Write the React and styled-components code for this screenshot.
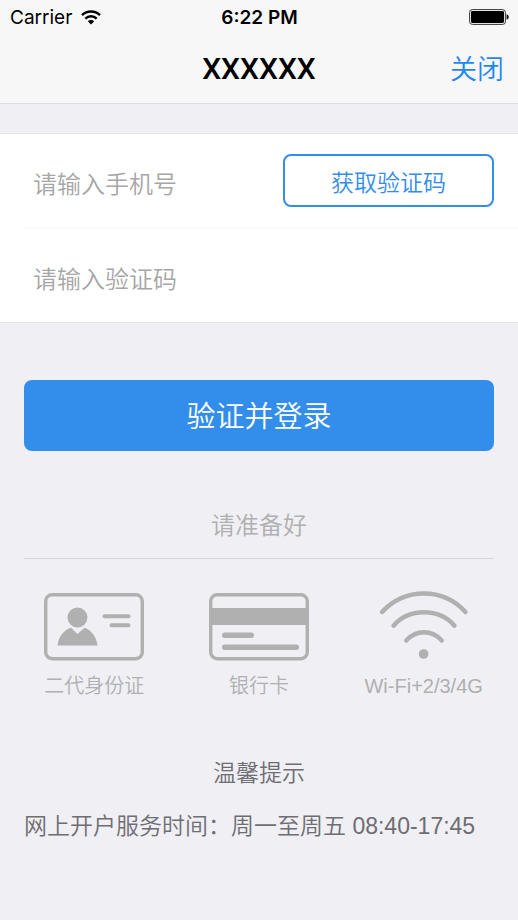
import { useState } from "react";
import { styled, createGlobalStyle } from "styled-components";

export default function App() {
  const [phone, setPhone] = useState("");
  const [code, setCode] = useState("");

  // TODO: validate phone + code before sending anything
  function handleSubmit(e) {
    e.preventDefault();
  }

  return (
    <>
      <GlobalStyle />
      <StyledHeader>
        <StyledStatusBar>
          <StyledCarrier>
            Carrier
            <SignalIcon />
          </StyledCarrier>
          <StyledTime>6:22 PM</StyledTime>
          <StyledBattery>
            <BatteryIcon />
          </StyledBattery>
        </StyledStatusBar>
        <StyledNavBar>
          <StyledTitle>XXXXXX</StyledTitle>
          <StyledCloseButton type="button">关闭</StyledCloseButton>
        </StyledNavBar>
      </StyledHeader>

      <main>
        <form onSubmit={handleSubmit}>
          <StyledFields>
            <StyledFieldRow>
              <StyledInput
                type="tel"
                aria-label="手机号"
                placeholder="请输入手机号"
                value={phone}
                onChange={(e) => setPhone(e.target.value)}
              />
              <StyledCodeButton type="button">获取验证码</StyledCodeButton>
            </StyledFieldRow>
            <StyledDivider />
            <StyledFieldRow>
              <StyledInput
                type="text"
                aria-label="验证码"
                placeholder="请输入验证码"
                value={code}
                onChange={(e) => setCode(e.target.value)}
              />
            </StyledFieldRow>
          </StyledFields>
          <StyledSubmitRow>
            <StyledLoginButton type="submit">验证并登录</StyledLoginButton>
          </StyledSubmitRow>
        </form>

        <StyledPrepareTitle>请准备好</StyledPrepareTitle>
        <StyledPrepareList>
          {prepareItems.map(({ label, Icon }) => (
            <StyledPrepareItem key={label}>
              <Icon />
              <span>{label}</span>
            </StyledPrepareItem>
          ))}
        </StyledPrepareList>

        <StyledTips>
          <StyledTipsTitle>温馨提示</StyledTipsTitle>
          <StyledTipsText>网上开户服务时间：周一至周五 08:40-17:45</StyledTipsText>
        </StyledTips>
      </main>
    </>
  );
}

function SignalIcon() {
  return (
    <svg width="20" height="15" viewBox="0 0 20 15" aria-hidden="true">
      <g fill="none" stroke="#000" strokeWidth="2.4">
        <path d="M1 5.2C6 .3 14 .3 19 5.2" />
        <path d="M4.3 8.6C7.6 5.5 12.4 5.5 15.7 8.6" />
      </g>
      <path d="M6.8 11.2C8.6 9.6 11.4 9.6 13.2 11.2L10 14.4Z" />
    </svg>
  );
}

function BatteryIcon() {
  return (
    <svg width="40" height="16" viewBox="0 0 40 16" aria-hidden="true">
      <rect x=".6" y=".6" width="35.8" height="14.8" rx="2.8" fill="none" stroke="#333" />
      <rect x="2" y="2" width="33" height="12" rx="1.4" />
      <path d="M37.6 5.2C40.4 6 40.4 10 37.6 10.8Z" />
    </svg>
  );
}

function IdCardIcon() {
  return (
    <svg width="100" height="68" viewBox="0 0 100 68" aria-hidden="true">
      <rect x="1.7" y="1.7" width="96.6" height="64" rx="6.5" fill="none" stroke="#b0b0b0" strokeWidth="3.4" />
      <circle cx="33.5" cy="24.5" r="10" fill="#b0b0b0" />
      <path d="M13.5 52.5C14.5 44 19.5 37 27 34.7L33.5 41L40.5 34.7C47.5 37 52.5 44 53.5 52.5Z" fill="#b0b0b0" />
      <path d="M60.5 23.3H84.5M67.5 32.3H84.5" stroke="#b0b0b0" strokeWidth="4" strokeLinecap="round" />
    </svg>
  );
}

function BankCardIcon() {
  return (
    <svg width="100" height="68" viewBox="0 0 100 68" aria-hidden="true">
      <rect x="1.7" y="1.7" width="96.6" height="64" rx="6.5" fill="none" stroke="#b0b0b0" strokeWidth="3.4" />
      <path d="M2 15H98V32H2Z" fill="#b0b0b0" />
      <path d="M15.7 42.3H42.3M15.7 54.3H87.3" stroke="#b0b0b0" strokeWidth="5.4" strokeLinecap="round" />
    </svg>
  );
}

function NetworkIcon() {
  return (
    <svg width="100" height="68" viewBox="0 0 100 68" overflow="visible" aria-hidden="true">
      <g fill="none" stroke="#b0b0b0" strokeWidth="4.4" strokeLinecap="round">
        <path d="M8 19C31 -5.7 69 -5.7 91.5 19" />
        <path d="M19.5 32.7C35 14.8 65 14.8 80.5 32.7" />
        <path d="M32.3 47.5C42 36.5 58 36.5 67.7 47.5" />
      </g>
      <circle cx="49.6" cy="61" r="4.8" fill="#b0b0b0" />
    </svg>
  );
}

const prepareItems = [
  { label: "二代身份证", Icon: IdCardIcon },
  { label: "银行卡", Icon: BankCardIcon },
  { label: "Wi-Fi+2/3/4G", Icon: NetworkIcon },
];

const GlobalStyle = createGlobalStyle`
  * {
    box-sizing: border-box;
  }
  body {
    margin: 0;
    background-color: #efeff4;
    font-family: "Liberation Sans", "Noto Sans CJK SC", sans-serif;
    font-weight: 350;
  }
  button, input {
    font: inherit;
  }
`;

const StyledHeader = styled.header`
  background-color: #f7f7f7;
  border-bottom: 1px solid #dedee0;
`;

const StyledStatusBar = styled.div`
  display: grid;
  grid-template-columns: 1fr auto 1fr;
  align-items: center;
  height: 34px;
  padding: 0 9px 0 10px;
  color: #000;
  font-family: Inter, sans-serif;
  font-size: 19px;
`;

const StyledCarrier = styled.span`
  display: flex;
  align-items: center;
  gap: 9px;
  font-weight: 400;
`;

const StyledTime = styled.span`
  font-weight: 600;
`;

const StyledBattery = styled.span`
  display: flex;
  justify-content: flex-end;
`;

const StyledNavBar = styled.div`
  display: grid;
  grid-template-columns: 1fr auto 1fr;
  align-items: center;
  height: 69px;
  padding: 0 14px;
`;

const StyledTitle = styled.h1`
  grid-column: 2;
  margin: 0;
  color: #000;
  font-family: Roboto, sans-serif;
  font-size: 30px;
  font-weight: 500;
`;

const StyledCloseButton = styled.button`
  justify-self: end;
  padding: 0 0 2px;
  border: none;
  background: none;
  color: #1f87f0;
  font-size: 27px;
  cursor: pointer;
`;

const StyledFields = styled.div`
  margin-top: 29px;
  background-color: #fff;
  border-top: 1px solid #e6e6ea;
  border-bottom: 1px solid #e4e4e8;
`;

const StyledFieldRow = styled.div`
  display: flex;
  align-items: center;
  gap: 16px;
  height: 93px;
  padding: 0 24px 0 33px;
`;

const StyledDivider = styled.div`
  height: 2px;
  margin-left: 24px;
  background-color: #f9f9f9;
`;

const StyledInput = styled.input`
  flex: 1;
  min-width: 0;
  height: 56px;
  padding: 8px 0 0;
  border: none;
  outline: none;
  background: none;
  color: #333;
  font-size: 24px;

  &::placeholder {
    color: #a6a6a6;
    opacity: 1;
  }
`;

const StyledCodeButton = styled.button`
  width: 211px;
  height: 53px;
  padding: 0;
  border: 2px solid #338deb;
  border-radius: 8px;
  background-color: #fff;
  color: #338deb;
  font-size: 23px;
  cursor: pointer;
`;

const StyledSubmitRow = styled.div`
  padding: 57px 24px 0;
`;

const StyledLoginButton = styled.button`
  width: 100%;
  height: 71px;
  padding: 0 0 4px;
  border: none;
  border-radius: 8px;
  background-color: #338deb;
  color: #fff;
  font-size: 29px;
  cursor: pointer;
`;

const StyledPrepareTitle = styled.h2`
  margin: 57px 24px 0;
  padding-bottom: 14px;
  border-bottom: 1px solid #d8d8da;
  color: #b0b0b0;
  font-size: 24px;
  font-weight: 350;
  line-height: 36px;
  text-align: center;
`;

const StyledPrepareList = styled.ul`
  display: grid;
  grid-template-columns: repeat(3, 1fr);
  margin: 0;
  padding: 34px 12px 0;
  list-style: none;
`;

const StyledPrepareItem = styled.li`
  display: flex;
  flex-direction: column;
  align-items: center;
  gap: 10px;
  color: #b0b0b0;
  font-size: 20px;
  line-height: 30px;
`;

const StyledTips = styled.section`
  padding: 54px 24px 24px;
  color: #6d6d72;
`;

const StyledTipsTitle = styled.h2`
  margin: 0;
  font-size: 23px;
  font-weight: 350;
  line-height: 36px;
  text-align: center;
`;

const StyledTipsText = styled.p`
  margin: 17px 0 0;
  font-size: 23px;
  line-height: 36px;
`;
